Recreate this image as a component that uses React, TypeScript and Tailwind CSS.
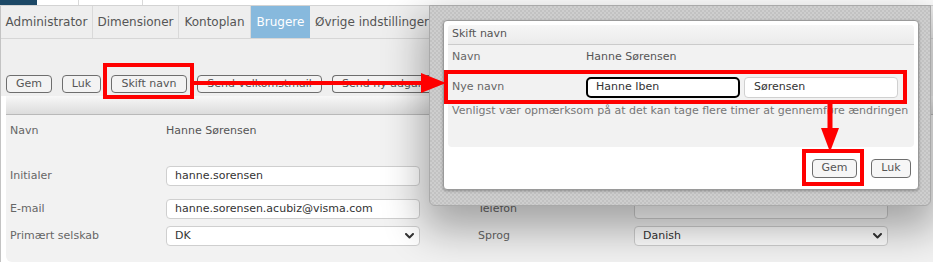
import React from "react";

const Chevron = () => (
  <svg width="9" height="6" viewBox="0 0 9 6" className="shrink-0">
    <path d="M1 1 L4.5 4.5 L8 1" fill="none" stroke="#333" strokeWidth="2" strokeLinecap="round" strokeLinejoin="round" />
  </svg>
);

const PageInput = ({ value }: { value?: string }) => (
  <div className="flex h-[20px] w-[254px] items-center rounded-[4px] border border-[#cfcfcf] bg-white px-[8px] text-[#333]">
    {value}
  </div>
);

const PageSelect = ({ value }: { value: string }) => (
  <div className="flex h-[20px] w-[254px] items-center justify-between rounded-[4px] border border-[#cfcfcf] bg-white pl-[8px] pr-[5px] text-[#333]">
    <span>{value}</span>
    <Chevron />
  </div>
);

const Btn = ({ label, w }: { label: string; w: string }) => (
  <div className={`flex h-[18px] shrink-0 items-center justify-center rounded-[4px] border border-[#6e6e6e] bg-[#f3f3f3] text-[#555] whitespace-nowrap ${w}`}>
    {label}
  </div>
);

export default function App() {
  return (
    <div className="relative h-[269px] w-[933px] overflow-hidden bg-white font-['DejaVu_Sans',sans-serif] text-[11px] text-[#666]">
      <div className="relative h-[262px] overflow-hidden">
        {/* top strip */}
        <div className="flex h-[6px] border-b border-[#d3d3d3] bg-white">
          <div className="w-[37px] bg-[#1c4866]" />
          <div className="w-[42px] border-r border-[#d9d9d9]" />
          <div className="w-[64px] border-r border-[#d9d9d9]" />
        </div>

        <div className="flex h-[256px] flex-col border-l border-[#c3c3c3]">
          {/* tabs */}
          <div className="flex h-[33px] shrink-0 border-b border-[#d6d6d6] bg-[#eeeeee] text-[12px] text-[#555]">
            <div className="flex w-[92px] items-center justify-center border-r border-[#d9d9d9]">Administrator</div>
            <div className="flex w-[86px] items-center justify-center border-r border-[#d9d9d9]">Dimensioner</div>
            <div className="flex w-[72px] items-center justify-center border-r border-[#d9d9d9]">Kontoplan</div>
            <div className="flex w-[59px] items-center justify-center bg-[#87b9dd] text-white">Brugere</div>
            <div className="flex w-[120px] items-center justify-start overflow-hidden pl-[5px] whitespace-nowrap">Øvrige indstillinger</div>
          </div>

          {/* toolbar */}
          <div className="flex h-[57px] shrink-0 gap-[10px] bg-[#efefef] pl-[5px] pt-[36px]">
            <Btn label="Gem" w="w-[46px]" />
            <Btn label="Luk" w="w-[39px]" />
            <Btn label="Skift navn" w="w-[76px]" />
            <Btn label="Send velkomstmail" w="w-[125px]" />
            <div className="flex h-[18px] w-[97px] shrink-0 items-center overflow-hidden whitespace-nowrap rounded-l-[4px] border border-r-0 border-[#6e6e6e] bg-[#f3f3f3] pl-[9px] text-[#555]">
              Send ny adgangskode
            </div>
          </div>

          {/* panel */}
          <div className="flex-1 bg-white pl-[5px]">
            <div className="h-full rounded-bl-[6px] bg-[#f2f2f2]">
              <div className="h-[19px] border-b border-[#b9b9b9] bg-gradient-to-b from-[#f8f8f8] to-[#dcdcdc]" />
              <div className="flex flex-col pl-[4px]">
                <div className="mt-[6px] flex h-[20px] items-center">
                  <div className="w-[156px]">Navn</div>
                  <div className="w-[254px] text-[#555]">Hanne Sørensen</div>
                </div>
                <div className="mt-[25px] flex h-[20px] items-center">
                  <div className="w-[156px]">Initialer</div>
                  <PageInput value="hanne.sorensen" />
                </div>
                <div className="mt-[13px] flex h-[20px] items-center">
                  <div className="w-[156px]">E-mail</div>
                  <PageInput value="hanne.sorensen.acubiz@visma.com" />
                  <div className="ml-[58px] w-[156px]">Telefon</div>
                  <PageInput />
                </div>
                <div className="mt-[7px] flex h-[20px] items-center">
                  <div className="w-[156px]">Primært selskab</div>
                  <PageSelect value="DK" />
                  <div className="ml-[58px] w-[156px]">Sprog</div>
                  <PageSelect value="Danish" />
                </div>
              </div>
            </div>
          </div>
        </div>

        {/* modal */}
        <div className="absolute left-[429px] top-[5px] h-[201px] w-[502px] rounded-b-[6px] border border-[#a9a9a9] bg-[#c8c8c8] bg-[image:repeating-conic-gradient(#c2c2c2_0%_25%,#cecece_0%_50%)] bg-[length:4px_4px] pl-[13px] pt-[14px] shadow-[0_18px_40px_6px_rgba(0,0,0,0.32)]">
          <div className="flex h-[170px] w-[476px] flex-col rounded-[4px] border border-[#9a9a9a] bg-white p-[4px] shadow-[0_1px_3px_rgba(0,0,0,0.3)]">
            <div className="h-[122px] shrink-0 rounded-[4px] bg-[#f2f2f2]">
              <div className="flex h-[20px] items-center rounded-t-[4px] border-b border-[#cbcbcb] bg-gradient-to-b from-[#f6f6f6] to-[#ebebeb] pl-[4px] text-[#555]">
                Skift navn
              </div>
              <div className="flex flex-col pl-[4px]">
                <div className="mt-[2px] flex h-[20px] items-center">
                  <div className="w-[134px]">Navn</div>
                  <div className="text-[#555]">Hanne Sørensen</div>
                </div>
                <div className="mt-[10px] flex h-[21px] items-center">
                  <div className="w-[134px]">Nye navn</div>
                  <div className="flex h-[21px] w-[154px] items-center rounded-[5px] border-2 border-black bg-white pl-[8px] text-[#333]">
                    Hanne Iben
                  </div>
                  <div className="ml-[4px] flex h-[21px] w-[154px] items-center rounded-[4px] border border-[#d0d0d0] bg-white pl-[9px] text-[#333]">
                    Sørensen
                  </div>
                </div>
                <div className="mt-[6px] whitespace-nowrap leading-[14px] text-[#777]">
                  Venligst vær opmærksom på at det kan tage flere timer at gennemføre ændringen
                </div>
              </div>
            </div>
            <div className="flex justify-end gap-[14px] pr-[3px] pt-[12px]">
              <div className="flex h-[19px] w-[45px] items-center justify-center rounded-[4px] border border-[#6e6e6e] bg-[#f6f6f6] text-[#555]">Gem</div>
              <div className="flex h-[19px] w-[40px] items-center justify-center rounded-[4px] border border-[#6e6e6e] bg-[#f6f6f6] text-[#555]">Luk</div>
            </div>
          </div>
        </div>

        {/* annotations */}
        <div className="absolute left-[103px] top-[63px] h-[36px] w-[91px] border-4 border-[#ff0000]" />
        <svg className="absolute left-[193px] top-[71px]" width="254" height="24" viewBox="0 0 254 24">
          <rect x="0" y="10" width="232" height="4" fill="#ff0000" />
          <polygon points="228,2 253,12 228,22" fill="#ff0000" />
        </svg>
        <div className="absolute left-[444px] top-[70px] h-[34px] w-[463px] border-4 border-[#ff0000]" />
        <svg className="absolute left-[820px] top-[103px]" width="20" height="50" viewBox="0 0 20 50">
          <rect x="7.5" y="0" width="5" height="28" fill="#ff0000" />
          <polygon points="1,25 19,25 10,49" fill="#ff0000" />
        </svg>
        <div className="absolute left-[802px] top-[149px] h-[37px] w-[62px] border-4 border-[#ff0000]" />
      </div>
    </div>
  );
}
